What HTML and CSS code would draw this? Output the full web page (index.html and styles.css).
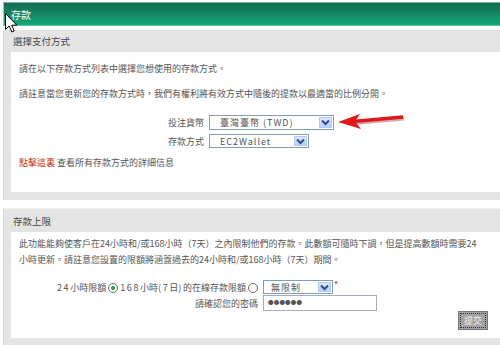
FILE: index.html
```html
<!DOCTYPE html>
<html lang="zh-Hant">
<head>
    <meta charset="UTF-8">
    <title>存款</title>
    <link rel="stylesheet" href="styles.css">
</head>
<body>
    <div class="header">存款</div>

    <div class="panel">
        <div class="panel-title">選擇支付方式</div>
        <div class="panel-body first-body">
            <p class="line">請在以下存款方式列表中選擇您想使用的存款方式。</p>
            <p class="line gap">請註意當您更新您的存款方式時，我們有權利將有效方式中隨後的提款以最適當的比例分開。</p>

            <div class="form-row row-currency">
                <span class="label">投注貨幣</span>
                <div class="select wide">
                    <span class="select-text">臺灣臺幣 (TWD)</span>
                    <span class="drop"><svg width="9" height="7" viewBox="0 0 9 7"><path d="M1 1.5 L4.5 5 L8 1.5" fill="none" stroke="#2a4a9a" stroke-width="2"/></svg></span>
                </div>
                <svg class="red-arrow" width="72" height="22" viewBox="0 0 72 22">
                    <line x1="18" y1="12" x2="68" y2="7.5" stroke="#8a1010" stroke-width="4" opacity="0.35"/>
                    <line x1="17" y1="10.5" x2="67" y2="6" stroke="#e01818" stroke-width="3.5"/>
                    <polygon points="2,11 24,3 19,10.5 25,18" fill="#e01818"/>
                </svg>
            </div>

            <div class="form-row row-method">
                <span class="label">存款方式</span>
                <div class="select narrow">
                    <span class="select-text">EC2Wallet</span>
                    <span class="drop"><svg width="9" height="7" viewBox="0 0 9 7"><path d="M1 1.5 L4.5 5 L8 1.5" fill="none" stroke="#2a4a9a" stroke-width="2"/></svg></span>
                </div>
            </div>

            <p class="line detail"><span class="link">點擊這裏</span> 查看所有存款方式的詳細信息</p>
        </div>
    </div>

    <div class="panel second">
        <div class="panel-title tall">存款上限</div>
        <div class="panel-body second-body">
            <p class="line loose">此功能能夠使客戶在24小時和/或168小時（7天）之內限制他們的存款。此數額可隨時下調，但是提高數額時需要24<br>小時更新。請註意您設置的限額將涵蓋過去的24小時和/或168小時（7天）期間。</p>

            <div class="form-row row-limit">
                <span class="label long"><span class="num">24</span>小時限額 <span class="radio checked"></span> <span class="num">168</span>小時<span class="num">(7</span>日<span class="num">)</span>的在線存款限額 <span class="radio"></span></span>
                <div class="select small">
                    <span class="select-text">無限制</span>
                    <span class="drop"><svg width="9" height="7" viewBox="0 0 9 7"><path d="M1 1.5 L4.5 5 L8 1.5" fill="none" stroke="#2a4a9a" stroke-width="2"/></svg></span>
                </div>
                <span class="star">*</span>
            </div>

            <div class="form-row row-pass">
                <span class="label long">請確認您的密碼</span>
                <div class="input">●●●●●●</div>
            </div>

            <div class="actions">
                <span class="button">提交</span>
            </div>
        </div>
    </div>

    <svg class="cursor" width="13" height="21" viewBox="0 0 13 21">
        <path d="M0.5 0.5 L0.5 16.5 L4.2 13 L6.8 19 L9.2 18 L6.7 12.2 L11.8 12.2 Z" fill="#fff" stroke="#000" stroke-width="1"/>
    </svg>
</body>
</html>
```

FILE: styles.css
```css
body {
    margin: 0;
    font-family: "Noto Sans CJK TC", "DejaVu Sans", sans-serif;
    font-size: 9px;
    color: #555;
    background-color: #fff;
    position: relative;
}

p {
    margin: 0;
}

.header {
    margin: 2px 0 0 3px;
    height: 24px;
    box-sizing: border-box;
    padding-left: 7px;
    line-height: 23px;
    font-size: 10px;
    color: #fff;
    border-top: 1px solid #6ab89c;
    border-bottom: 1px solid #55c89e;
    border-left: 1px solid #8fd0b8;
    background: linear-gradient(#136a50, #14a878);
}

.panel {
    margin: 4px 0 0 3px;
    padding: 0 0 8px 7px;
    background-color: #e4e4e4;
    border-left: 1px solid #d6d6d6;
}

.panel.second {
    margin-top: 8px;
    border-top: 1px solid #f0f0f0;
}

.panel-title {
    height: 22px;
    line-height: 22px;
    padding-left: 2px;
    color: #444;
    font-size: 9.5px;
}

.panel-title.tall {
    height: 23px;
    line-height: 24px;
}

.panel-body {
    background-color: #fff;
    padding: 11px 10px 23px 8px;
}

.second-body {
    padding: 4px 12px 8px 8px;
}

.line {
    line-height: 12px;
    white-space: nowrap;
}

.line.gap {
    margin-top: 13px;
}

.line.loose {
    line-height: 16px;
}

.line.detail {
    margin-top: 9px;
}

.link {
    color: #cc3311;
}

.form-row {
    display: flex;
    align-items: center;
    gap: 5px;
}

.row-currency {
    margin-top: 15px;
    height: 15px;
}

.row-method {
    margin-top: 4px;
    height: 14px;
}

.row-limit {
    margin-top: 12px;
    height: 14px;
}

.row-pass {
    margin-top: 1px;
    height: 16px;
}

.label {
    width: 185px;
    text-align: right;
    white-space: nowrap;
}

.label.long {
    width: 239px;
}

.num {
    letter-spacing: 1.6px;
}

.select {
    display: flex;
    align-items: center;
    height: 100%;
    box-sizing: border-box;
    border: 1px solid #7f9db9;
    background-color: #fff;
    padding: 1px;
}

.select.wide {
    width: 125px;
}

.select.narrow {
    width: 100px;
}

.select.small {
    width: 70px;
}

.select-text {
    flex: 1;
    padding-left: 9px;
    letter-spacing: 1px;
}

.select.small .select-text {
    padding-left: 6px;
}

.drop {
    width: 13px;
    height: 100%;
    display: flex;
    align-items: center;
    justify-content: center;
    box-sizing: border-box;
    border: 1px solid #b7c8f0;
    background: linear-gradient(#dfe8fd, #b9cdf8);
}

.red-arrow {
    margin: -4px 0 -3px -3px;
}

.radio {
    display: inline-block;
    width: 10px;
    height: 10px;
    box-sizing: border-box;
    border: 1px solid #6a6a6a;
    border-radius: 50%;
    background-color: #fff;
    vertical-align: -2px;
    position: relative;
}

.radio.checked::after {
    content: "";
    position: absolute;
    left: 2px;
    top: 2px;
    width: 4px;
    height: 4px;
    border-radius: 50%;
    background-color: #22a03a;
}

.star {
    color: #dd2222;
    margin-left: -4px;
    align-self: flex-start;
    line-height: 10px;
}

.input {
    width: 114px;
    height: 16px;
    box-sizing: border-box;
    border: 1px solid #a5acb5;
    padding-left: 4px;
    font-size: 5.5px;
    line-height: 14px;
    letter-spacing: 0.2px;
    color: #555;
}

.actions {
    display: flex;
    justify-content: flex-end;
}

.button {
    width: 30px;
    height: 19px;
    box-sizing: border-box;
    border: 1px solid #777;
    outline: 1px dotted #333;
    outline-offset: -3px;
    background-color: #a3a3a3;
    color: #eee;
    text-align: center;
    line-height: 17px;
    font-size: 9px;
}

.cursor {
    position: absolute;
    left: 5px;
    top: 13px;
}
```
